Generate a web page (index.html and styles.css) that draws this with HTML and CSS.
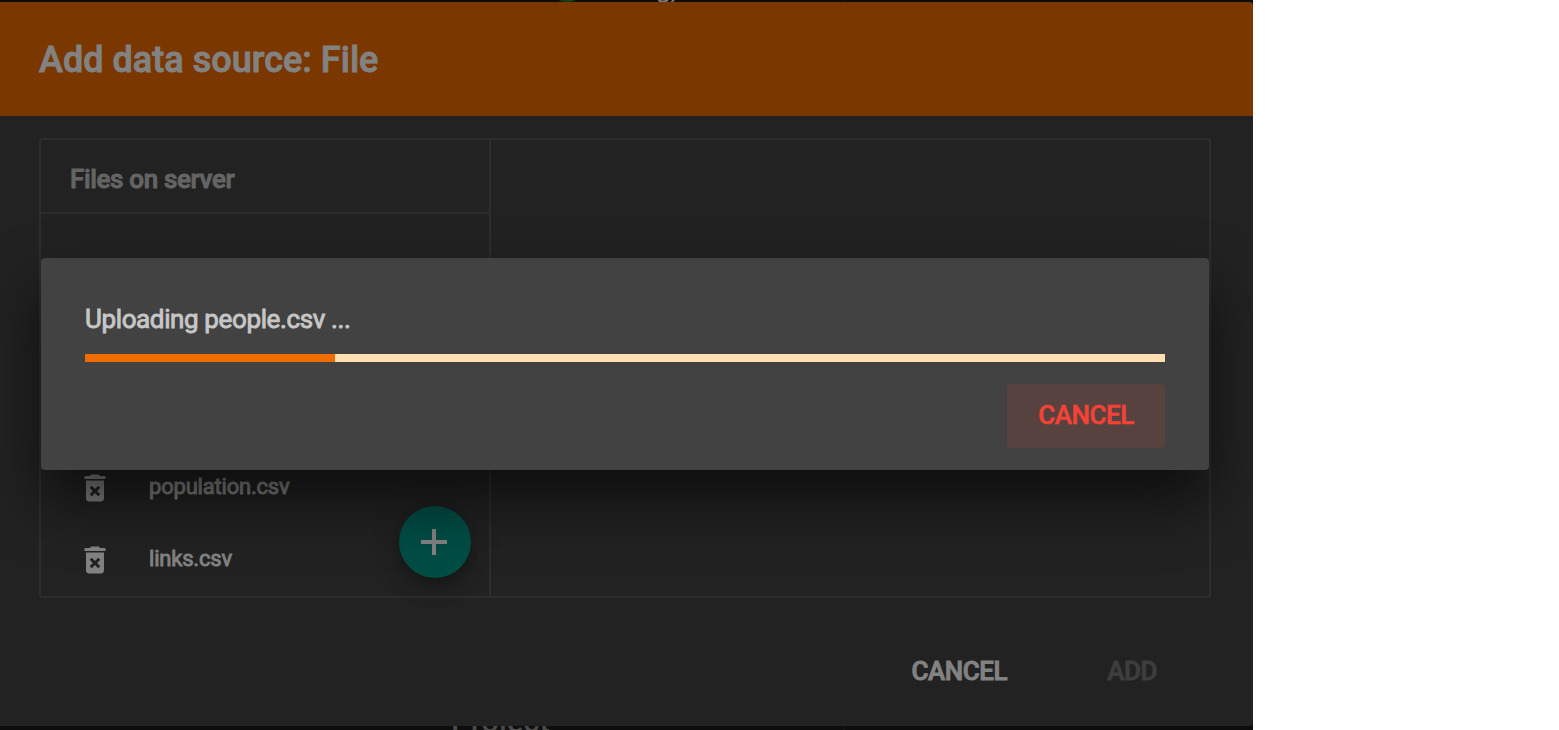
FILE: index.html
```html
<!DOCTYPE html>
<html lang="en">
<head>
<meta charset="utf-8">
<title>Add data source</title>
<link rel="stylesheet" href="styles.css">
</head>
<body>
<div class="viewport">
  <span class="page-dot"></span>
  <span class="page-text page-text-top">g)</span>
  <span class="page-text page-text-bottom">Project</span>
  <span class="page-line"></span>
  <section class="dialog">
    <header class="dialog-header"><h1>Add data source: File</h1></header>
    <div class="dialog-body">
      <div class="panel">
        <div class="files">
          <h2 class="files-title">Files on server</h2>
          <ul class="file-list">
            <li class="file"><svg class="icon" viewBox="0 0 24 24"><path d="M6 19c0 1.100.9 2 2 2h8c1.100 0 2-.9 2-2V7H6v12zm2.460-7.120l1.410-1.410L12 12.590l2.120-2.120 1.410 1.410L13.410 14l2.120 2.120-1.410 1.410L12 15.410l-2.120 2.120-1.410-1.410L10.590 14l-2.130-2.120zM15.500 4l-1-1h-5l-1 1H5v2h14V4z"/></svg><span>population.csv</span></li>
            <li class="file"><svg class="icon" viewBox="0 0 24 24"><path d="M6 19c0 1.100.9 2 2 2h8c1.100 0 2-.9 2-2V7H6v12zm2.460-7.120l1.410-1.410L12 12.590l2.120-2.120 1.410 1.410L13.410 14l2.120 2.120-1.410 1.410L12 15.410l-2.120 2.120-1.410-1.410L10.590 14l-2.130-2.120zM15.500 4l-1-1h-5l-1 1H5v2h14V4z"/></svg><span>links.csv</span></li>
          </ul>
          <button class="fab" aria-label="Add file"><svg viewBox="0 0 26 26"><path d="M11 0h4v11h11v4H15v11h-4V15H0v-4h11z"/></svg></button>
        </div>
        <div class="preview"></div>
      </div>
    </div>
    <footer class="dialog-actions"><button class="action">CANCEL</button><button class="action disabled">ADD</button></footer>
  </section>
  <section class="upload">
    <p class="upload-text">Uploading people.csv ...</p>
    <div class="progress"><div class="progress-fill"></div></div>
    <button class="upload-cancel">CANCEL</button>
  </section>
</div>
</body>
</html>
```
FILE: styles.css
```css
* { box-sizing: border-box; margin: 0; padding: 0; }
body { background: #fff; font-family: Roboto, sans-serif; overflow: hidden; }
button { border: 0; background: none; font: inherit; }
.viewport { position: relative; width: 1253px; height: 730px; padding-top: 2px; background: #0d0d0d; overflow: hidden; }
.page-dot { position: absolute; left: 547px; top: -38px; width: 40px; height: 40px; border-radius: 50%; background: #143e17; }
.page-text { position: absolute; color: #484848; white-space: nowrap; line-height: 40px; font-size: 31px; font-weight: 500; }
.page-text-top { left: 656px; top: -31px; font-size: 26px; color: #777; letter-spacing: -1px; }
.page-text-bottom { left: 451px; top: 702px; }
.page-line { position: absolute; left: 843px; top: 0; width: 2px; height: 730px; background: #121212; }
.dialog { position: relative; display: flex; flex-direction: column; height: 724px; background: #222; border-radius: 0 4px 4px 0; overflow: hidden; }
.dialog-header { height: 114px; padding: 0 39px; background: #7a3700; }
.dialog-header h1 { font-size: 36px; line-height: 116px; font-weight: 500; color: #828282; letter-spacing: .03px; -webkit-text-stroke: .9px; }
.dialog-body { padding: 22px 42px 0 39px; }
.panel { display: flex; height: 460px; border: 2px solid #2d2d2d; border-radius: 4px; }
.files { position: relative; width: 450px; border-right: 2px solid #2d2d2d; display: flex; flex-direction: column; }
.files-title { height: 74px; padding-left: 29px; border-bottom: 2px solid #2d2d2d; font-size: 26px; line-height: 78px; font-weight: 500; color: #646464; letter-spacing: -.35px; -webkit-text-stroke: .9px; }
.preview { flex: 1; }
.file-list { list-style: none; margin-top: auto; }
.file { display: flex; align-items: center; height: 72px; padding-left: 36px; gap: 36px; color: #828282; font-size: 22px; line-height: 30px; letter-spacing: -.2px; }
.file span { margin-bottom: 2px; -webkit-text-stroke: .9px; }
.icon { width: 36px; height: 36px; fill: #828282; }
.fab { position: absolute; left: 358px; top: 366px; width: 72px; height: 72px; padding: 0 2px 0 0; border-radius: 50%; background: #004d45; display: flex; align-items: center; justify-content: center; box-shadow: 0 6px 10px -2px rgba(0,0,0,.2), 0 12px 20px rgba(0,0,0,.14), 0 2px 36px rgba(0,0,0,.12); }
.fab svg { width: 26px; height: 26px; fill: #828282; }
.dialog-actions { display: flex; justify-content: flex-end; gap: 100px; padding: 57px 96px 0 0; }
.action { font-size: 26px; font-weight: 500; line-height: 32px; color: #828282; letter-spacing: -.45px; -webkit-text-stroke: .9px; }
.disabled { color: #3d3d3d; }
.upload { position: absolute; left: 41px; top: 258px; width: 1168px; height: 212px; padding: 44px; background: #424242; border-radius: 4px; display: flex; flex-direction: column; box-shadow: 0 30px 60px rgba(0,0,0,.6); }
.upload-text { color: #c6c6c6; font-size: 26px; line-height: 34px; margin-bottom: 18px; letter-spacing: -.38px; -webkit-text-stroke: .9px; }
.progress { flex: none; height: 8px; background: #ffe0b2; }
.progress-fill { width: 250px; height: 8px; background: #ef6c00; }
.upload-cancel { align-self: flex-end; flex: none; margin-top: 22px; width: 158px; height: 64px; padding-bottom: 2px; border-radius: 4px; background: #584240; color: #f44336; font-size: 26px; font-weight: 500; letter-spacing: -.5px; -webkit-text-stroke: .5px; }
```
